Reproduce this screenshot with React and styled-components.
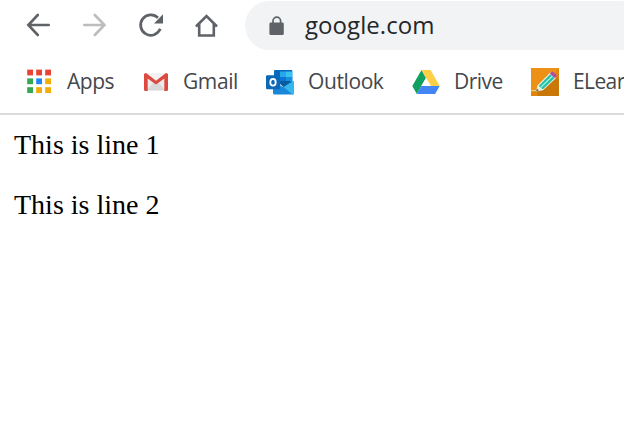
import React from "react";
import styled, { createGlobalStyle } from "styled-components";

const GlobalStyle = createGlobalStyle`
  * { box-sizing: border-box; }
  body { margin: 0; background: #fff; overflow: hidden; }
`;

const Window = styled.div`
  width: 624px;
  height: 423px;
  overflow: hidden;
  background: #fff;
  font-family: "Open Sans", "Noto Sans", sans-serif;
`;

const Toolbar = styled.nav`
  display: flex;
  height: 50px;
  padding: 1px 0 0 24px;
`;

const NavButton = styled.button`
  display: flex;
  align-items: center;
  flex: none;
  width: 56px;
  height: 48px;
  padding: 0;
  border: 0;
  background: none;
  color: ${(p) => (p.disabled ? "#bcbdbe" : "#5f6368")};

  svg { display: block; }
`;

const AddressBar = styled.div`
  display: flex;
  align-items: center;
  flex: none;
  width: 400px;
  height: 49px;
  margin-left: -3px;
  padding-left: 24px;
  border-radius: 25px;
  background: #f1f3f4;
`;

const Address = styled.span`
  margin: 0 0 2px 20px;
  font-size: 24px;
  line-height: 47px;
  letter-spacing: ${(p) => p.$tracking}px;
  color: #24272b;
`;

const Bookmarks = styled.div`
  display: flex;
  height: 65px;
  padding: 0 0 1px 24px;
  border-bottom: 2px solid #dadbdc;
`;

const Bookmark = styled.a`
  display: flex;
  align-items: center;
  flex: none;
  width: ${(p) => p.$width}px;
  white-space: nowrap;

  svg { display: block; flex: none; margin-top: 2px; }
`;

const Label = styled.span`
  margin-left: ${(p) => p.$gap}px;
  font-size: 21px;
  line-height: 30px;
  letter-spacing: ${(p) => p.$tracking}px;
  color: #44474b;
`;

const Page = styled.main`
  padding: 14px 14px 0;
  font-family: "Liberation Serif", "Times New Roman", serif;
  font-size: 28px;
  line-height: 32px;
  color: #000;
`;

const Line = styled.p`
  margin: 0 0 28px;
`;

const BackIcon = () => (
  <svg width="30" height="30" viewBox="0 0 30 30" fill="none" stroke="currentColor" strokeWidth="2.6" strokeLinecap="round" strokeLinejoin="miter">
    <path d="M24.7 15H5M13.8 5L4.3 15L13.8 25" />
  </svg>
);

const ForwardIcon = () => (
  <svg width="30" height="30" viewBox="0 0 30 30" fill="none" stroke="currentColor" strokeWidth="2.6" strokeLinecap="round">
    <path d="M4.3 15H24.5M14.8 5L24.5 15L14.8 25" />
  </svg>
);

const ReloadIcon = () => (
  <svg width="30" height="30" viewBox="0 0 30 30" fill="none">
    <path d="M22 7.8A10.2 10.2 0 1 0 24.3 18.8" stroke="currentColor" strokeWidth="2.7" />
    <path d="M27 4.2V13.5H18Z" fill="currentColor" />
  </svg>
);

const HomeIcon = () => (
  <svg width="30" height="30" viewBox="0 0 30 30" fill="none" stroke="currentColor" strokeWidth="2.6">
    <path d="M4 16.5L14.5 6L25 16.5" />
    <path d="M7.2 14V25.5H21.8V14" />
  </svg>
);

const LockIcon = () => (
  <svg width="16" height="20" viewBox="0 0 16 20" fill="none">
    <path d="M4 8V5a3.8 3.8 0 0 1 7.6 0V8" stroke="#5f6368" strokeWidth="1.7" />
    <rect x=".4" y="6.5" width="14.4" height="12.6" rx="1.4" fill="#5f6368" />
  </svg>
);

const RED = "#ea4335";
const GREEN = "#34a853";
const BLUE = "#2086f5";
const YELLOW = "#f3ac08";
const TILES = [RED, RED, RED, GREEN, BLUE, YELLOW, GREEN, YELLOW, YELLOW];

const AppsIcon = () => (
  <svg width="28" height="28" viewBox="0 0 28 28">
    {TILES.map((fill, i) => (
      <rect key={i} x={3.2 + (i % 3) * 9} y={1.6 + Math.floor(i / 3) * 8.8} width="5.8" height="5.8" fill={fill} />
    ))}
  </svg>
);

const GmailIcon = () => (
  <svg width="28" height="28" viewBox="0 0 28 28">
    <path d="M4 5H24V23H4Z" fill="#eceaea" />
    <path d="M5 22L12 14L14 15.5L16 14L23 22Z" fill="#d9d9da" />
    <path d="M4 5H24L14 13Z" fill="#f3f1f1" />
    <path d="M2 6.5Q2 5 4 5L14 12.8L24 5Q26 5 26 6.5V21.5Q26 23 24.5 23H22.3V10.4L14 16.6L5.7 10.4V23H3.5Q2 23 2 21.5Z" fill="#dc493e" />
  </svg>
);

const OutlookIcon = () => (
  <svg width="28" height="28" viewBox="0 0 28 28">
    <path d="M8 3Q8 2 9 2H25.3Q26.3 2 26.3 3V15H8Z" fill="#0869bd" />
    <path d="M14 3.5H20V9H14Z" fill="#28a8ea" />
    <path d="M20 3.5H26.3V9H20Z" fill="#38c2f1" />
    <path d="M14 9H20V15H14Z" fill="#0878d4" />
    <path d="M20 9H26.3V14H20Z" fill="#1591e2" />
    <path d="M7 13L17 19L28 13V25Q28 26.5 26.5 26.5H8.5Q7 26.5 7 25Z" fill="#1988d9" />
    <path d="M17.5 19L28 13V25Q28 26.5 26.5 26.5Z" fill="#35b8ed" />
    <path d="M14 16L17.5 19L24 15V13H14Z" fill="#075b9f" />
    <rect x="0" y="7.2" width="14" height="14" rx="1.2" fill="#0b68b7" />
    <ellipse cx="7" cy="14.2" rx="2.7" ry="3.4" fill="none" stroke="#fff" strokeWidth="1.8" />
  </svg>
);

const DriveIcon = () => (
  <svg width="28" height="28" viewBox="0 0 28 28">
    <path d="M9.5 2L.3 18L4.8 26L14 10Z" fill="#11a05f" />
    <path d="M9.5 2H18.6L27.7 18H18.8Z" fill="#ffcf48" />
    <path d="M9.3 18H27.7L23.1 26H4.8Z" fill="#4485f4" />
    <path d="M14 10L18.6 18H9.3Z" fill="#fff" />
  </svg>
);

const PencilIcon = () => (
  <svg width="28" height="28" viewBox="0 0 28 28">
    <path d="M0 0H28V28H0Z" fill="#df850b" />
    <path d="M0 0H28L24 5L5 23H0Z" fill="#ec9016" />
    <path d="M26 9L28 11V28H7L6 23Z" fill="#c97708" />
    <path d="M0 22.7H6.5" stroke="#ffd782" strokeWidth="1" />
    <path d="M5 23.4L6.5 17.4L19.5 4.2L25.4 9.7L12 22.3Z" fill="#e9f4df" />
    <path d="M7.7 17.9L19.2 6.3L23.3 10.2L11.8 21.2Z" fill="#20bca8" />
    <path d="M9.7 19.5L21.2 8.2" stroke="#a1efd6" strokeWidth="1.4" />
    <path d="M18.8 5.6L20.4 4Q21.5 3.2 22.4 4L25.4 7Q26.2 7.8 25.3 8.7L23.8 10.2Z" fill="#b44b9e" />
    <path d="M5 23.4L6 20.5L7.9 22.4Z" fill="#5a6960" />
  </svg>
);

const BOOKMARKS = [
  { name: "Apps", Icon: AppsIcon, width: 118, gap: 15, tracking: -0.5 },
  { name: "Gmail", Icon: GmailIcon, width: 124, gap: 13, tracking: -0.4 },
  { name: "Outlook", Icon: OutlookIcon, width: 146, gap: 14, tracking: -0.4 },
  { name: "Drive", Icon: DriveIcon, width: 119, gap: 14, tracking: -0.55 },
  { name: "ELear", Icon: PencilIcon, width: 93, gap: 14, tracking: -0.6 },
];

export default function App() {
  return (
    <Window>
      <GlobalStyle />
      <Toolbar>
        <NavButton aria-label="Back"><BackIcon /></NavButton>
        <NavButton aria-label="Forward" disabled><ForwardIcon /></NavButton>
        <NavButton aria-label="Reload"><ReloadIcon /></NavButton>
        <NavButton aria-label="Home"><HomeIcon /></NavButton>
        <AddressBar>
          <LockIcon />
          <Address $tracking={0.05}>google.com</Address>
        </AddressBar>
      </Toolbar>
      <Bookmarks>
        {BOOKMARKS.map(({ name, Icon, width, gap, tracking }) => (
          <Bookmark key={name} $width={width}>
            <Icon />
            <Label $gap={gap} $tracking={tracking}>{name}</Label>
          </Bookmark>
        ))}
      </Bookmarks>
      <Page>
        <Line>This is line 1</Line>
        <Line>This is line 2</Line>
      </Page>
    </Window>
  );
}
